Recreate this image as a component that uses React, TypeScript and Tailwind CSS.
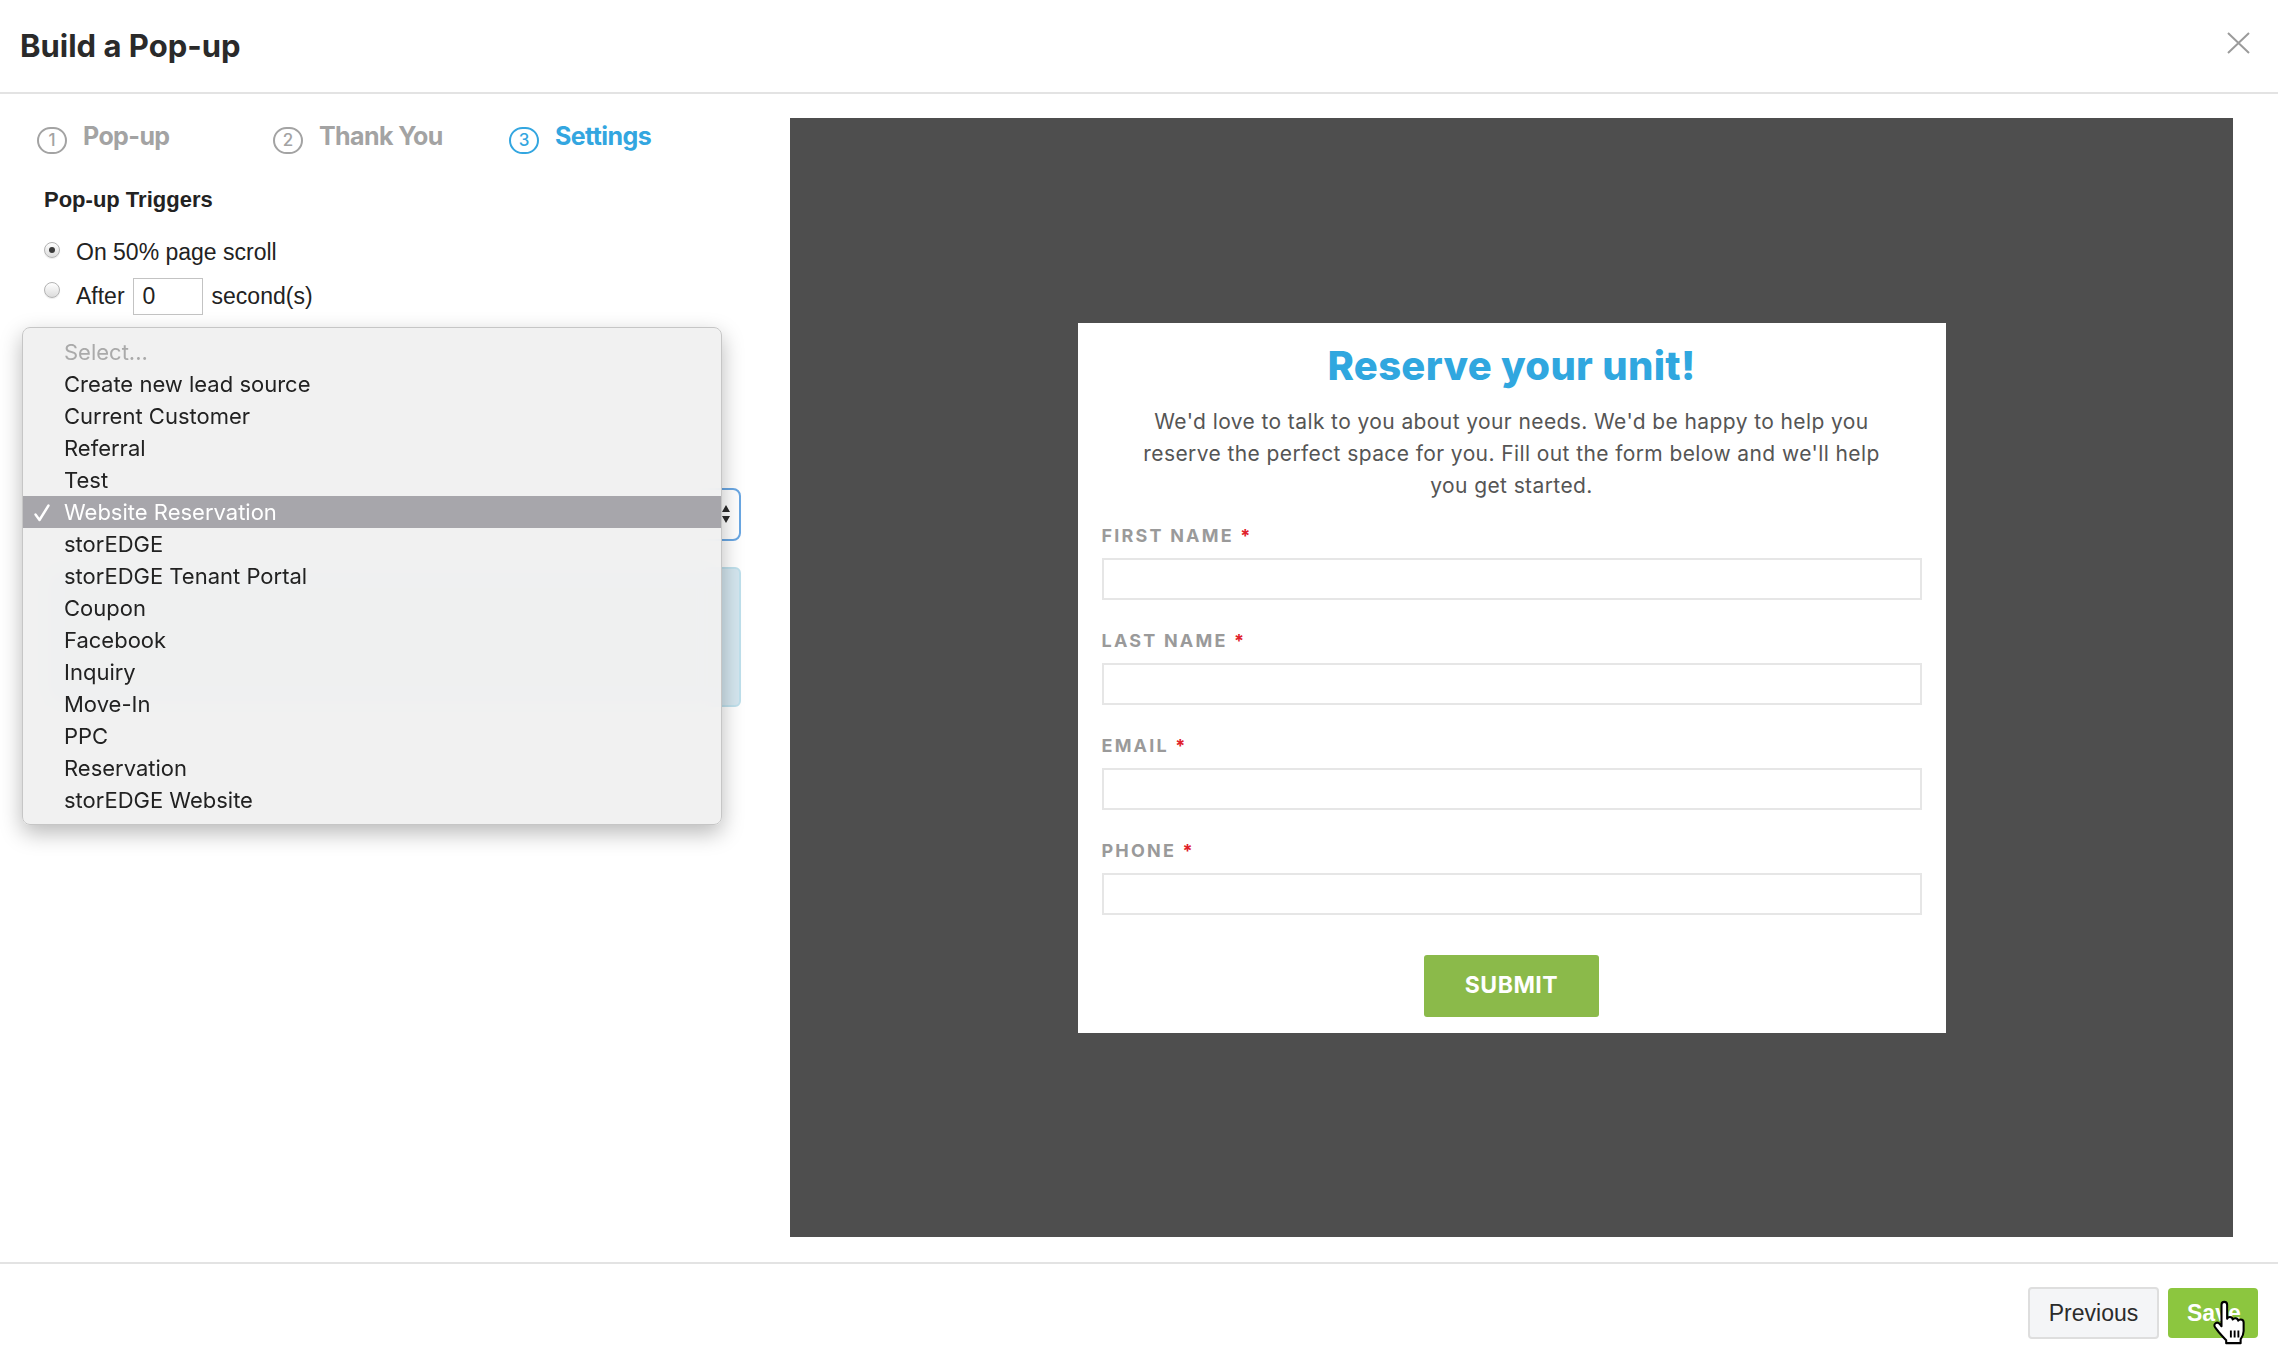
import { useState } from "react";

type Step = { n: number; label: string };

const steps: Step[] = [
  { n: 1, label: "Pop-up" },
  { n: 2, label: "Thank You" },
  { n: 3, label: "Settings" },
];

const sources = [
  "Create new lead source",
  "Current Customer",
  "Referral",
  "Test",
  "Website Reservation",
  "storEDGE",
  "storEDGE Tenant Portal",
  "Coupon",
  "Facebook",
  "Inquiry",
  "Move-In",
  "PPC",
  "Reservation",
  "storEDGE Website",
];

const fields = ["First Name", "Last Name", "Email", "Phone"];

function Radio({ checked }: { checked?: boolean }) {
  return (
    <span className="flex h-[16px] w-[16px] shrink-0 items-center justify-center rounded-full border border-[#b3b3b3] bg-gradient-to-b from-[#ffffff] to-[#dcdcdc] shadow-[0_1px_1px_rgba(0,0,0,0.08)]">
      {checked && <span className="h-[6px] w-[6px] rounded-full bg-[#3a3a3a]" />}
    </span>
  );
}

function HandCursor() {
  return (
    <svg width="34" height="45" viewBox="0 0 18 24" className="pointer-events-none">
      <path
        d="M6.5 1C7.4 1 8 1.7 8 2.5V10C8.3 9.4 8.9 9.1 9.5 9.1C10.3 9.1 10.9 9.6 11 10.4C11.3 9.9 11.8 9.7 12.4 9.7C13.2 9.7 13.8 10.3 13.9 11C14.2 10.6 14.7 10.4 15.2 10.4C16.1 10.4 16.8 11.1 16.8 12V16.5C16.8 18.5 16 19.8 15.2 21V23H7.5V21.5C6.5 20.5 5 18.8 3.6 17.2L1.6 14.6C1 13.8 1.1 12.9 1.8 12.4C2.5 11.9 3.5 12.1 4.1 12.9L5 14V2.5C5 1.7 5.6 1 6.5 1Z"
        fill="#fff"
        stroke="#000"
        strokeWidth="1.1"
        strokeLinejoin="round"
      />
      <path d="M10 16.2V20M12 16.2V20M14 16.2V20" stroke="#000" strokeWidth="1" />
    </svg>
  );
}

export default function App() {
  const [selected] = useState("Website Reservation");

  return (
    <div className="flex h-screen w-full flex-col bg-white font-['Inter',sans-serif] text-[#333]">
      <header className="flex h-[94px] shrink-0 items-center justify-between border-b-2 border-[#e3e3e3] pl-[20px] pr-[28px]">
        <h1 className="text-[31px] font-bold text-[#2a2a2a]">Build a Pop-up</h1>
        <button type="button" className="mb-[6px] text-[#9b9b9b]">
          <svg width="23" height="22" viewBox="0 0 23 22">
            <path d="M1 1L22 21M22 1L1 21" stroke="currentColor" strokeWidth="2" />
          </svg>
        </button>
      </header>

      <div className="flex min-h-0 flex-1">
        <aside className="relative w-[790px] shrink-0">
          <nav className="flex pl-[37px] pt-[23px]">
            {steps.map((s) => {
              const active = s.n === 3;
              return (
                <div key={s.n} className="flex w-[236px] items-center gap-[16px]">
                  <span
                    className={
                      active
                        ? "mt-[10px] flex h-[27px] w-[30px] items-center justify-center rounded-full border-2 border-[#33a6e0] text-[17px] font-medium text-[#33a6e0]"
                        : "mt-[10px] flex h-[27px] w-[30px] items-center justify-center rounded-full border-2 border-[#a3a3a3] text-[17px] font-medium text-[#a3a3a3]"
                    }
                  >
                    {s.n}
                  </span>
                  <span
                    className={
                      active
                        ? "text-[25px] leading-[30px] font-bold tracking-[-0.6px] text-[#33a6e0]"
                        : "text-[25px] leading-[30px] font-bold tracking-[-0.6px] text-[#a3a3a3]"
                    }
                  >
                    {s.label}
                  </span>
                </div>
              );
            })}
          </nav>

          <div className="pl-[44px] pr-[49px] font-['Liberation_Sans',Arial,sans-serif] text-[#222]">
            <h2 className="mt-[33px] text-[22px] leading-[26px] font-bold">Pop-up Triggers</h2>

            <label className="mt-[23px] flex h-[32px] items-center gap-[16px] text-[23px]">
              <span className="mb-[5px]">
                <Radio checked />
              </span>
              On 50% page scroll
            </label>

            <label className="mt-[10px] flex h-[37px] items-center text-[23px]">
              <span className="mb-[14px] mr-[16px]">
                <Radio />
              </span>
              After
              <span className="ml-[8px] mr-[9px] flex h-[37px] w-[70px] items-center border border-[#c3c3c3] pl-[9px]">0</span>
              second(s)
            </label>

            <div className="relative mt-[173px] flex h-[53px] items-center rounded-[8px] border-2 border-[#6aa7e3] bg-white pl-[14px] text-[21px]">
              <svg width="10" height="20" viewBox="0 0 10 20" className="absolute right-[8px] top-[14px]">
                <path d="M5 1L9 8H1Z M5 19L9 12H1Z" fill="#2b2b2b" />
              </svg>
            </div>

            <div className="mt-[26px] h-[140px] rounded-[6px] border-2 border-[#bfe0ec] bg-[#d4e6ef]" />
          </div>

          <div className="absolute left-[22px] top-[233px] w-[700px] rounded-[8px] border border-[#c6c6c6] bg-[#f0f0f0]/[0.94] py-[8px] text-[22px] shadow-[0_8px_22px_rgba(0,0,0,0.28)] backdrop-blur-md">
            <div className="flex h-[32px] items-center pl-[41px] text-[#aaaaaa]">Select...</div>
            {sources.map((src) =>
              src === selected ? (
                <div key={src} className="relative flex h-[32px] items-center bg-[#a7a6ab] pl-[41px] text-white">
                  <svg width="16" height="18" viewBox="0 0 16 18" className="absolute left-[11px] top-[8px]">
                    <path d="M1.5 10.5L5.5 16L14.5 1.5" fill="none" stroke="#fff" strokeWidth="2.4" strokeLinecap="round" strokeLinejoin="round" />
                  </svg>
                  {src}
                </div>
              ) : (
                <div key={src} className="flex h-[32px] items-center pl-[41px] text-[#222]">
                  {src}
                </div>
              )
            )}
          </div>
        </aside>

        <section className="mb-[25px] mr-[45px] mt-[24px] flex flex-1 items-center justify-center bg-[#4e4e4e]">
          <div className="w-[868px] bg-white px-[24px] pb-[16px] pt-[20px]">
            <h3 className="text-center text-[40px] leading-[46px] font-extrabold tracking-[0.3px] text-[#30a7df]">
              Reserve your unit!
            </h3>
            <p className="mt-[17px] text-center text-[21px] leading-[32px] tracking-[0.4px] text-[#555]">
              We'd love to talk to you about your needs. We'd be happy to help you
              <br />
              reserve the perfect space for you. Fill out the form below and we'll help
              <br />
              you get started.
            </p>

            <div className="mt-[24px] flex flex-col gap-[31px]">
              {fields.map((f) => (
                <div key={f} className="flex flex-col">
                  <span className="text-[18px] leading-[20px] font-bold uppercase tracking-[2.2px] text-[#9a9a9a]">
                    {f} <span className="text-[#e0202a]">*</span>
                  </span>
                  <div className="mt-[12px] h-[42px] border-2 border-[#e6e6e6]" />
                </div>
              ))}
            </div>

            <div className="mt-[40px] flex justify-center">
              <button
                type="button"
                className="h-[62px] w-[175px] rounded-[3px] bg-[#8bba4a] text-[23px] font-bold tracking-[0.5px] text-white"
              >
                SUBMIT
              </button>
            </div>
          </div>
        </section>
      </div>

      <footer className="flex h-[88px] shrink-0 items-start justify-end gap-[9px] border-t-2 border-[#e3e3e3] pr-[20px] pt-[23px] font-['Liberation_Sans',Arial,sans-serif]">
        <button
          type="button"
          className="h-[52px] w-[131px] rounded-[4px] border-2 border-[#dedede] bg-[#f4f5f7] text-[23px] text-[#2b2b2b]"
        >
          Previous
        </button>
        <button
          type="button"
          className="relative mt-[1px] h-[50px] w-[90px] rounded-[4px] bg-[#8cc63f] pl-[19px] text-left text-[23px] font-bold text-white"
        >
          Save
          <span className="absolute left-[44px] top-[12px]">
            <HandCursor />
          </span>
        </button>
      </footer>
    </div>
  );
}
